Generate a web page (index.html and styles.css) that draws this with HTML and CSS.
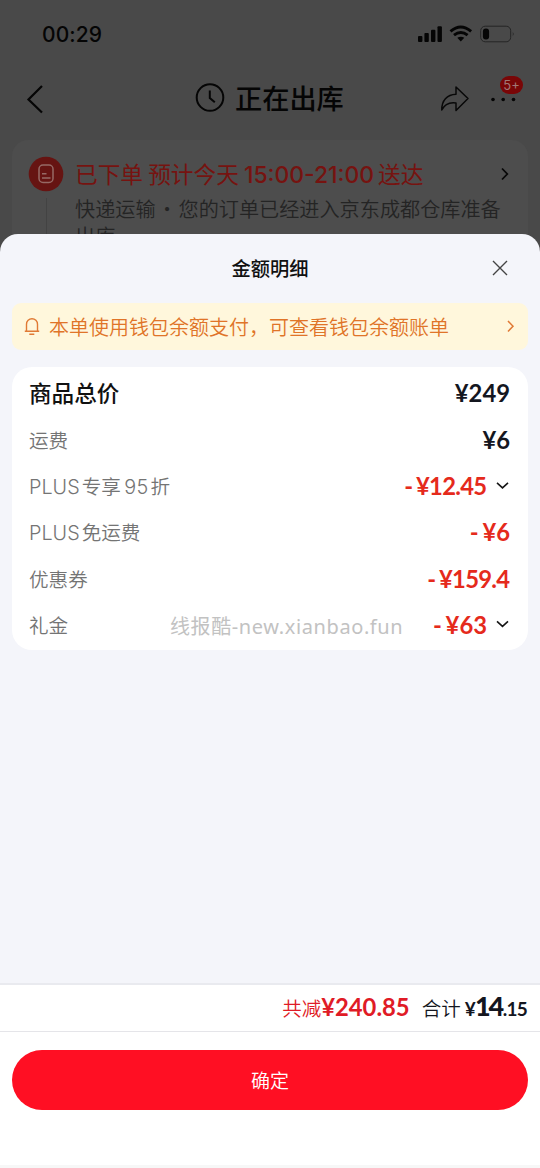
FILE: index.html
```html
<!DOCTYPE html>
<html lang="zh-CN">
<head>
<meta charset="utf-8">
<title>金额明细</title>
<link rel="stylesheet" href="styles.css">
</head>
<body>
<div class="screen">
  <div class="order">
    <div class="status">
      <span class="time">00:29</span>
      <svg class="status-icons" width="97" height="18" viewBox="0 0 97 18">
        <g fill="#050505">
          <rect x="0" y="11" width="4.4" height="6" rx="1"/>
          <rect x="6.4" y="8" width="4.4" height="9" rx="1"/>
          <rect x="13" y="4.700" width="4.400" height="12.300" rx="1"/>
          <rect x="19.500" y="1.200" width="4.400" height="15.800" rx="1"/>
          <path d="M39.300 12.700q3.500-2 7 0L42.800 16.500z"/>
          <rect x="64.900" y="3.500" width="6.200" height="11" rx="3"/>
        </g>
        <g fill="none" stroke="#050505" stroke-width="2.900">
          <path d="M32.500 6.300q10.300-8.600 20.600 0"/>
          <path d="M36 10.200q6.800-5.400 13.600 0"/>
        </g>
        <rect x="62.700" y="1.200" width="30" height="15.600" rx="4.500" fill="none" stroke="#252525"/>
        <path d="M94.800 6.800v4.400q1.800-2.200 0-4.400z" fill="#252525"/>
      </svg>
    </div>
    <div class="nav">
      <svg class="back" width="20" height="30" viewBox="0 0 20 30"><path d="M17 2 3.500 15.500 17 28.500" fill="none" stroke="#050505" stroke-width="2.200"/></svg>
      <svg class="clock" width="30" height="30" viewBox="0 0 30 30" fill="none" stroke="#050505" stroke-width="2"><circle cx="15" cy="13.500" r="13.300"/><path d="M14.800 6.500V14l5 4.300"/></svg>
      <span class="nav-title">正在出库</span>
      <svg class="share" width="30" height="28" viewBox="0 0 30 28"><path d="M16 2 28 13.500 16 25.500V18C9 17 4.500 19.500 1.800 25 1.500 15.500 7 9.500 16 9.200z" fill="none" stroke="#080808" stroke-width="1.500" stroke-linejoin="round"/></svg>
      <div class="more">
        <svg width="26" height="6" viewBox="0 0 26 6" fill="#050505"><circle cx="3" cy="3.500" r="1.800"/><circle cx="13.200" cy="3.500" r="1.800"/><circle cx="23.500" cy="3.500" r="1.800"/></svg>
        <span class="badge">5+</span>
      </div>
    </div>
    <div class="track">
      <div class="rail">
        <svg width="36" height="36" viewBox="0 0 36 36" fill="none"><circle cx="18" cy="18" r="17.300" fill="#661412"/><rect x="11" y="9" width="14" height="17.500" rx="4" stroke="#966965" stroke-width="1.500"/><path d="M14 17.800h4.500M14 22h8.500" stroke="#966965" stroke-width="1.500"/></svg>
        <i class="line"></i>
      </div>
      <div class="track-text">
        <div class="eta"><span>已下单 预计今天<span class="eta-num">15:00-21:00</span>送达</span>
          <svg width="10" height="14" viewBox="0 0 10 14"><path d="m1 2.500 5.300 5.500L1 13.500" fill="none" stroke="#080808" stroke-width="1.800"/></svg>
        </div>
        <p class="desc">快递运输 · 您的订单已经进入京东成都仓库准备出库</p>
      </div>
    </div>
  </div>

  <div class="sheet">
    <div class="sheet-head">
      <span>金额明细</span>
      <svg class="close" width="16" height="16" viewBox="0 0 16 16"><path d="m1 1 14 14M15 1 1 15" stroke="#444" stroke-width="1.400"/></svg>
    </div>
    <div class="notice">
      <svg width="16" height="18" viewBox="0 0 16 18" fill="none" stroke="#e07a35" stroke-width="1.400"><path d="M.8 13.200h14.400M2.500 13.200V6.200a5.500 5.500 0 0 1 11 0v7M5.300 16.200h5"/></svg>
      <span class="notice-text">本单使用钱包余额支付，可查看钱包余额账单</span>
      <svg width="8" height="13" viewBox="0 0 8 13"><path d="m1 1 5 5.200-5 5.200" fill="none" stroke="#e07a35" stroke-width="1.500"/></svg>
    </div>
    <div class="bill">
      <div class="row"><span class="total-label">商品总价</span><span class="price">¥249</span></div>
      <div class="row"><span>运费</span><span class="price">¥6</span></div>
      <div class="row"><span><span class="latin">PLUS</span>专享<span class="latin num">95</span>折</span><span class="price off long">- ¥12.45</span><svg class="chev" width="13" height="8" viewBox="0 0 13 8"><path d="m1 .8 5.500 5 5.500-5" fill="none" stroke="#151515" stroke-width="1.600"/></svg></div>
      <div class="row"><span><span class="latin">PLUS</span>免运费</span><span class="price off">- ¥6</span></div>
      <div class="row"><span>优惠券</span><span class="price off long">- ¥159.4</span></div>
      <div class="row"><span>礼金</span><span class="watermark">线报酷-new.xianbao.fun</span><span class="price off">- ¥63</span><svg class="chev" width="13" height="8" viewBox="0 0 13 8"><path d="m1 .3 5.500 5 5.500-5" fill="none" stroke="#151515" stroke-width="1.600"/></svg></div>
    </div>
    <div class="footer">
      <div class="sum">
        <span class="saved">共减<b>¥240.85</b></span>
        <span class="sum-label">合计</span>
        <span class="pay">¥<b>14</b>.15</span>
      </div>
      <div class="action"><button class="confirm">确定</button></div>
    </div>
  </div>
</div>
</body>
</html>
```
FILE: styles.css
```css
* { box-sizing: border-box; }
body { margin: 0; font-family: "Noto Sans CJK SC", sans-serif; }
svg { display: block; flex: none; overflow: visible; }
.screen { width: 540px; height: 1168px; overflow: hidden; display: flex; flex-direction: column; background: #f4f5fa; }

.order { height: 264px; flex: none; overflow: hidden; background: #494949; }
.status { height: 68px; padding: 0 27px 0 42px; display: flex; align-items: center; justify-content: space-between; }
.time { font: 500 21px/24px Inter, sans-serif; letter-spacing: .1px; padding-top: 1px; color: #050505; }
.status-icons { margin-right: -2px; }
.nav { height: 62px; padding: 0 24px 0 25px; display: flex; align-items: center; color: #050505; }
.clock { margin-left: 150px; }
.nav-title { margin-left: 10px; font-size: 27.200px; line-height: 38px; padding-bottom: 4px; font-weight: 500; white-space: nowrap; }
.share { margin-left: auto; }
.more { margin-left: 20px; position: relative; }
.badge { position: absolute; left: 10px; top: -20px; width: 23px; height: 18px; border-radius: 9px; background: #790607; color: #a17776; font: 13px/18px Inter, sans-serif; text-align: center; }
.track { margin: 10px 12px 0; height: 140px; padding: 16px 17px 0 16px; border-radius: 16px; background: #4d4d4d; display: flex; }
.rail { width: 36px; flex: none; display: flex; flex-direction: column; align-items: center; }
.line { width: 1px; height: 70px; margin-top: 6px; background: #434343; }
.track-text { flex: 1; padding-left: 11px; min-width: 0; }
.eta { display: flex; align-items: center; justify-content: space-between; height: 34px; color: #761310; font-size: 22.700px; font-weight: 400; white-space: nowrap; }
.eta-num { font: 450 22.900px Inter, sans-serif; margin: 0 4px 0 5px; }
.desc { margin: 5px 0 0; width: 432px; font-size: 20.150px; line-height: 27px; color: #242424; font-weight: 350; word-spacing: -3.100px; }

.sheet { flex: 1; margin-top: -30px; position: relative; border-radius: 18px 18px 0 0; background: #f4f5fa; display: flex; flex-direction: column; }
.sheet-head { height: 69px; padding-bottom: 2px; position: relative; display: flex; align-items: center; justify-content: center; font-size: 19.300px; font-weight: 500; color: #111; }
.close { position: absolute; right: 32px; top: 26px; }
.notice { margin: 0 12px; height: 47px; flex: none; padding: 0 13px 0 11.500px; border-radius: 9px; background: #fff7dc; display: flex; align-items: center; color: #e07428; font-size: 20px; font-weight: 350; }
.notice-text { margin: 0 auto 0 9.500px; padding-bottom: 1px; white-space: nowrap; }
.bill { margin: 17px 12px 0; height: 283px; padding: 3px 18px 0 17px; border-radius: 20px; background: #fff; }
.row { height: 46.400px; display: flex; align-items: center; color: #747474; font-size: 19.600px; font-weight: 350; position: relative; }
.row > span:first-child { padding-bottom: 1px; }
.row .total-label { font-size: 22.600px; padding-bottom: 2px; font-weight: 500; color: #111; }
.latin { font: 350 19.800px Inter, sans-serif; margin-right: 2px; }
.num { margin-left: 3.500px; letter-spacing: .3px; }
.price { margin-left: auto; font: 700 23.800px Lato, sans-serif; color: #14161f; white-space: pre; word-spacing: -2px; }
.off { color: #e52a1c; }
.long { letter-spacing: -.7px; word-spacing: -1.500px; padding-right: .6px; }
.chev { margin: 0 1px 0 9px; }
.watermark { position: absolute; left: 141px; top: 10px; font: 20px/29px "Noto Sans", "Noto Sans CJK SC", sans-serif; letter-spacing: .6px; color: #c2c2c2; white-space: nowrap; }

.footer { margin-top: auto; flex: none; height: 185px; background: #fff; border-top: 2px solid #e9eaef; border-bottom: 3px solid #f7f7f7; }
.sum { height: 47px; padding-right: 13px; border-bottom: 1px solid #e5e5e9; display: flex; justify-content: flex-end; align-items: baseline; line-height: 46px; font-size: 19.500px; font-weight: 350; color: #14161f; }
.saved { color: #e01b26; }
.saved b { font: 700 23.800px Lato, sans-serif; }
.sum-label { margin-left: 12px; }
.pay { margin-left: 4px; font: 700 19px Lato, sans-serif; letter-spacing: -.8px; }
.pay b { font-size: 27px; letter-spacing: -2.200px; margin: 0 1px 0 0; }
.action { padding: 18px 12px 0; }
.confirm { display: block; width: 100%; height: 60px; padding: 0 0 1px; border: 0; border-radius: 30px; background: #ff0f23; color: #fff; font: 350 19px "Noto Sans CJK SC", sans-serif; }
```
